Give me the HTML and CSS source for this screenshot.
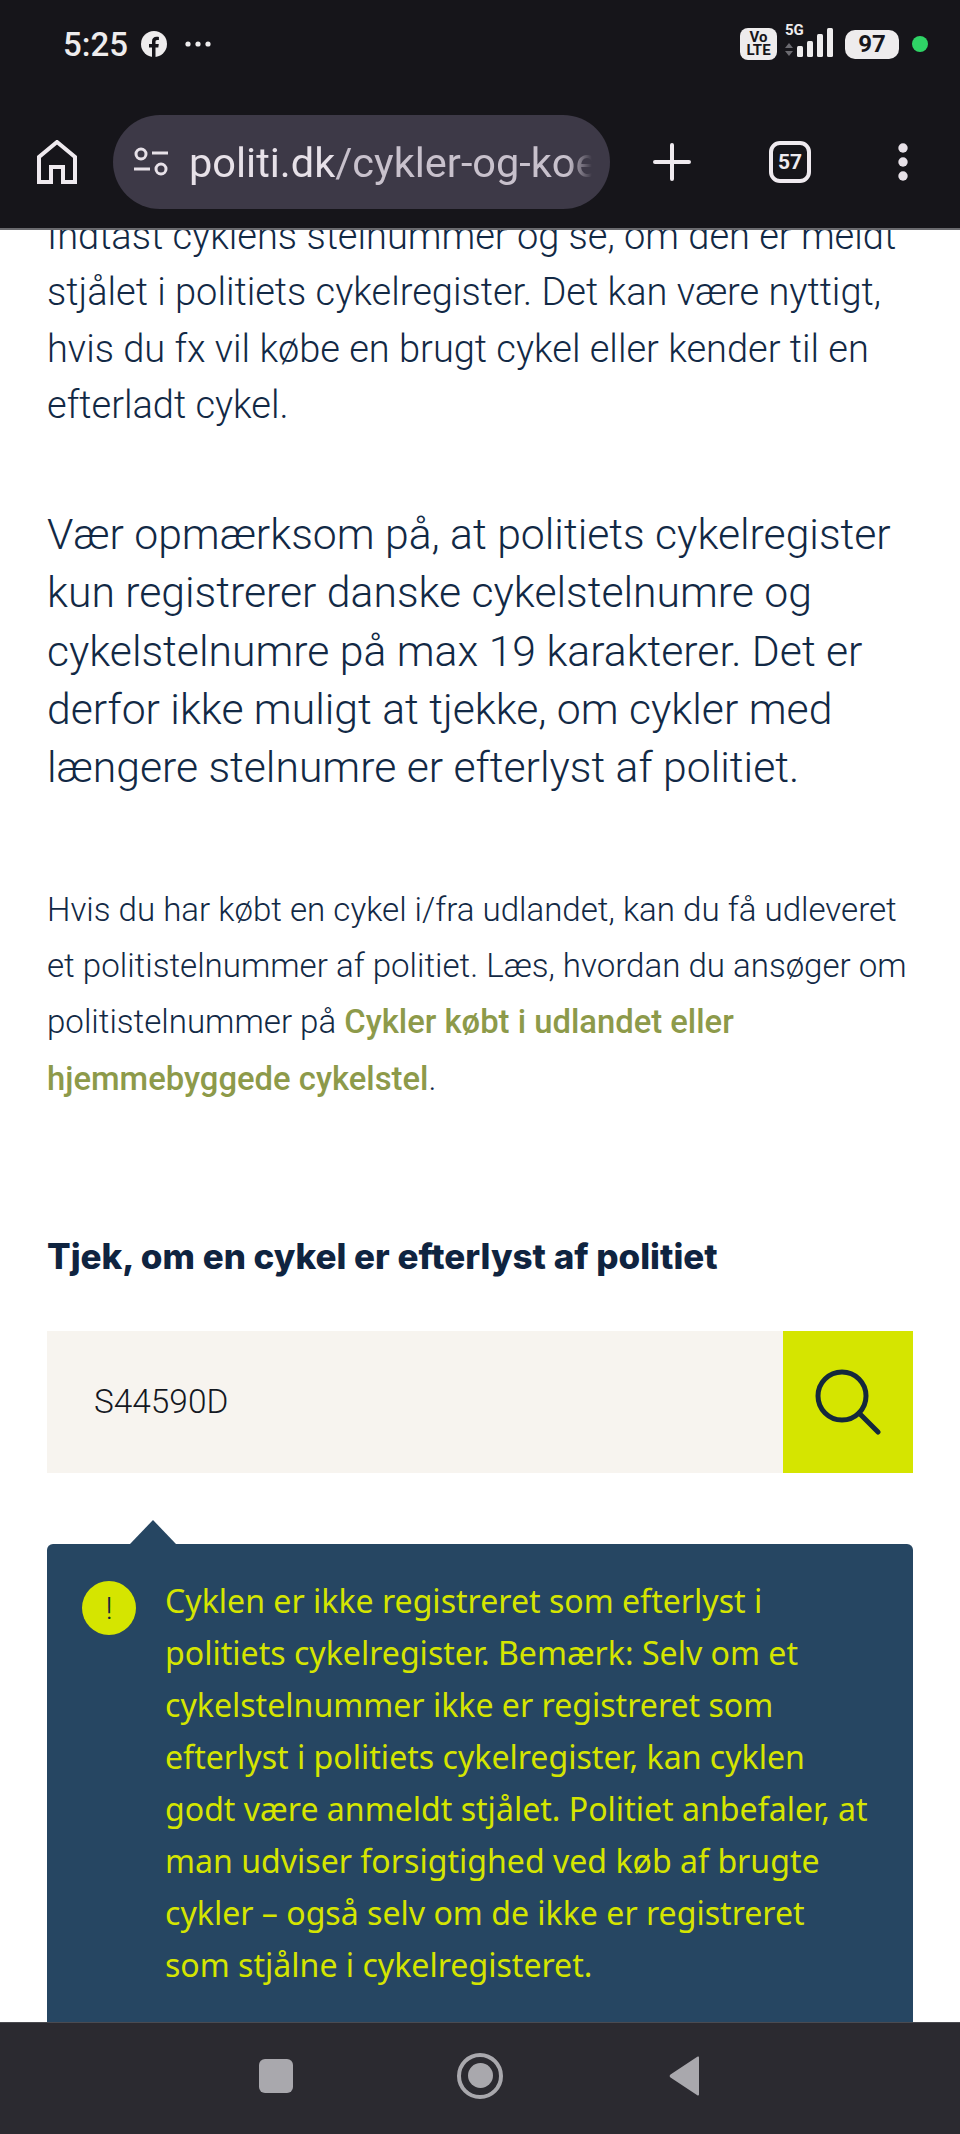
FILE: index.html
```html
<!DOCTYPE html>
<html lang="da">
<head>
<meta charset="utf-8">
<title>politi.dk</title>
<link rel="stylesheet" href="styles.css">
</head>
<body>
<div class="app">
  <header class="chrome">
    <div class="status">
      <div class="status-left">
        <span class="clock">5:25</span>
        <svg class="fb" viewBox="0 0 26 26"><circle cx="13" cy="13" r="13" fill="#eeeced"/><path d="M11 26V16.500H8V13h3v-2.600C11 7.400 12.800 5.800 15.500 5.800c1.300 0 2.400.2 2.400.2v3h-1.500c-1.500 0-1.900.9-1.900 1.800V13h3.300l-.5 3.500h-2.800V26z" fill="#16151a"/></svg>
        <svg class="dots" viewBox="0 0 26 6"><circle cx="3" cy="3" r="2.600" fill="#eeeced"/><circle cx="13" cy="3" r="2.600" fill="#eeeced"/><circle cx="23" cy="3" r="2.600" fill="#eeeced"/></svg>
      </div>
      <div class="status-right">
        <span class="volte">Vo<br>LTE</span>
        <div class="cell">
          <span class="fiveg">5G</span>
          <svg class="signal" viewBox="0 0 48 32">
            <path d="M0 20l4-5 4 5zM0 23l4 5 4-5z" fill="#6b6a70"/>
            <rect x="12" y="18" width="6" height="11" rx="1.500" fill="#eeeced"/>
            <rect x="22" y="13" width="6" height="16" rx="1.500" fill="#eeeced"/>
            <rect x="32" y="6" width="6" height="23" rx="1.500" fill="#eeeced"/>
            <rect x="42" y="0" width="6" height="29" rx="1.500" fill="#eeeced"/>
          </svg>
        </div>
        <span class="battery">97</span>
        <span class="green-dot"></span>
      </div>
    </div>
    <div class="toolbar">
      <svg class="home" viewBox="0 0 40 44"><path d="M2 42V17L20 2l18 15v25H26V27H14v15z" fill="none" stroke="#efeaef" stroke-width="4"/></svg>
      <div class="url-pill">
        <svg class="tune" viewBox="0 0 36 30"><circle cx="8" cy="7" r="5" fill="none" stroke="#e7e1e8" stroke-width="3"/><path d="M19 6h16M1 22h16" stroke="#e7e1e8" stroke-width="3"/><circle cx="28" cy="22" r="5" fill="none" stroke="#e7e1e8" stroke-width="3"/></svg>
        <span class="url"><span class="domain">politi.dk</span>/cykler-og-koebe-brugt-cykel</span>
      </div>
      <svg class="plus" viewBox="0 0 38 38"><path d="M19 2v34M2 19h34" stroke="#efeaef" stroke-width="4" stroke-linecap="round"/></svg>
      <span class="tabs">57</span>
      <svg class="menu" viewBox="0 0 10 38"><circle cx="5" cy="5" r="4.700" fill="#e7e1e8"/><circle cx="5" cy="19" r="4.700" fill="#e7e1e8"/><circle cx="5" cy="33" r="4.700" fill="#e7e1e8"/></svg>
    </div>
  </header>

  <main class="viewport">
    <div class="page">
      <p class="body">Indtast cyklens stelnummer og se, om den er meldt stjålet i politiets cykelregister. Det kan være nyttigt, hvis du fx vil købe en brugt cykel eller kender til en efterladt cykel.</p>
      <p class="lead">Vær opmærksom på, at politiets cykelregister kun registrerer danske cykelstelnumre og cykelstelnumre på max 19 karakterer. Det er derfor ikke muligt at tjekke, om cykler med længere stelnumre er efterlyst af politiet.</p>
      <p class="small">Hvis du har købt en cykel i/fra udlandet, kan du få udleveret et politistelnummer af politiet. Læs, hvordan du ansøger om politistelnummer på <a class="link" href="#">Cykler købt i udlandet eller hjemmebyggede cykelstel</a>.</p>
      <h2 class="heading">Tjek, om en cykel er efterlyst af politiet</h2>
      <form class="search">
        <div class="field">S44590D</div>
        <div class="go">
          <svg class="glass" viewBox="0 0 66 66"><circle cx="27" cy="27" r="24" fill="none" stroke="#14283c" stroke-width="5"/><path d="M44 44l19 19" stroke="#14283c" stroke-width="5" stroke-linecap="round"/></svg>
        </div>
      </form>
      <div class="alert">
        <span class="alert-arrow"></span>
        <span class="alert-icon">!</span>
        <p class="alert-text">Cyklen er ikke registreret som efterlyst i politiets cykelregister. Bemærk: Selv om et cykelstelnummer ikke er registreret som efterlyst i politiets cykelregister, kan cyklen godt være anmeldt stjålet. Politiet anbefaler, at man udviser forsigtighed ved køb af brugte cykler – også selv om de ikke er registreret som&nbsp;stjålne i cykelregisteret.</p>
      </div>
    </div>
  </main>

  <footer class="nav">
    <span class="nav-square"></span>
    <span class="nav-circle"><span class="nav-dot"></span></span>
    <svg class="nav-back" viewBox="0 0 32 40"><path d="M30 1.500v37a1 1 0 0 1-1.700.7L1.500 21.500a2 2 0 0 1 0-3L28.300.8A1 1 0 0 1 30 1.500z" fill="#a9a8ad"/></svg>
  </footer>
</div>
</body>
</html>
```
FILE: styles.css
```css
* { box-sizing: border-box; }
html, body { margin: 0; padding: 0; }
body { background: #fff; font-family: "Roboto", "Liberation Sans", sans-serif; }
.app { width: 960px; height: 2134px; display: flex; flex-direction: column; overflow: hidden; }

.chrome { height: 230px; flex: none; background: #16151a; border-bottom: 2px solid #6a6a6e; color: #eeeced; }
.status { height: 88px; padding: 0 32px 0 63px; display: flex; justify-content: space-between; align-items: center; }
.status-left { display: flex; align-items: center; }
.clock { font-size: 33px; font-weight: 500; width: 80px; }
.fb { width: 26px; height: 26px; margin-left: -2px; }
.dots { width: 26px; height: 6px; margin-left: 18px; }
.status-right { display: flex; align-items: center; }
.volte { width: 37px; height: 32px; border-radius: 8px; background: #eeeced; color: #16151a; font-size: 15px; line-height: 13px; font-weight: 700; text-align: center; padding-top: 3px; }
.cell { width: 48px; height: 34px; margin-left: 8px; position: relative; }
.signal { width: 48px; height: 32px; display: block; position: absolute; left: 0; top: 1px; }
.fiveg { position: absolute; left: 0; top: -4px; font-size: 15px; font-weight: 700; line-height: 15px; }
.battery { width: 54px; height: 29px; margin-left: 12px; border-radius: 10px; background: #eeeced; color: #16151a; font-size: 24px; font-weight: 700; line-height: 29px; text-align: center; }
.green-dot { width: 16px; height: 16px; border-radius: 50%; background: #2fd366; margin-left: 13px; }

.toolbar { height: 94px; margin-top: 27px; padding-left: 37px; display: flex; align-items: center; }
.home { width: 40px; height: 44px; flex: none; }
.url-pill { width: 497px; height: 94px; margin-left: 36px; border-radius: 47px; background: #3d3947; display: flex; align-items: center; padding: 0 18px 0 20px; flex: none; overflow: hidden; }
.tune { width: 36px; height: 30px; flex: none; }
.url { margin-left: 20px; font-size: 41.500px; color: #c8c1cc; white-space: nowrap; overflow: hidden; flex: 1; font-weight: 400; -webkit-mask-image: linear-gradient(to right, #000 94%, transparent); mask-image: linear-gradient(to right, #000 94%, transparent); }
.domain { color: #e7e1e8; }
.plus { width: 38px; height: 38px; margin-left: 43px; flex: none; }
.tabs { width: 42px; height: 42px; margin-left: 78px; border: 4px solid #efeaef; border-radius: 11px; font-size: 21px; font-weight: 700; line-height: 34px; text-align: center; color: #efeaef; flex: none; }
.menu { width: 10px; height: 38px; margin-left: 87px; flex: none; }

.viewport { flex: 1; overflow: hidden; background: #fff; min-height: 0; }
.page { margin-top: -22px; padding: 0 47px; color: #122945; }
.body { margin: 0 0 72px; font-size: 38px; line-height: 56.300px; font-weight: 300; }
.lead { margin: 0 0 85px; font-size: 42.700px; line-height: 58.300px; font-weight: 300; }
.small { margin: 0 0 127px; font-size: 33.100px; line-height: 56.300px; font-weight: 300; }
.link { color: #8d9a4a; font-size: 32.800px; font-weight: 500; text-decoration: none; }
.heading { margin: 0 0 53px; font-family: "Inter", sans-serif; font-size: 35px; line-height: 44px; font-weight: 800; color: #0f2440; }
.search { display: flex; height: 142px; margin: 0 0 71px; }
.field { flex: 1; background: #f7f4ef; padding-left: 47px; display: flex; align-items: center; font-size: 33.400px; font-weight: 300; color: #14181f; }
.go { width: 130px; background: #d5e500; display: flex; align-items: center; justify-content: center; }
.glass { width: 66px; height: 66px; }
.alert { position: relative; background: #264662; border-radius: 6px; padding: 31px 34px 120px 118px; }
.alert-arrow { position: absolute; left: 83px; top: -24px; width: 0; height: 0; border-left: 23px solid transparent; border-right: 23px solid transparent; border-bottom: 24px solid #264662; }
.alert-icon { position: absolute; left: 35px; top: 37px; width: 54px; height: 54px; border-radius: 50%; background: #d5e500; color: #14283c; font-size: 32px; font-weight: 300; line-height: 54px; text-align: center; }
.alert-text { margin: 0; font-family: "Noto Sans", sans-serif; font-size: 32.100px; line-height: 52px; color: #d5e500; }

.nav { height: 112px; flex: none; background: #2b2a30; display: flex; align-items: center; padding: 0 0 6px 259px; border-top: 1px solid #4a4a50; }
.nav-square { width: 34px; height: 34px; border-radius: 6px; background: #a9a8ad; }
.nav-circle { width: 46px; height: 46px; border-radius: 50%; border: 4px solid #a9a8ad; margin-left: 164px; display: flex; align-items: center; justify-content: center; }
.nav-dot { width: 25px; height: 25px; border-radius: 50%; background: #a9a8ad; }
.nav-back { width: 32px; height: 40px; margin-left: 166px; }
```
